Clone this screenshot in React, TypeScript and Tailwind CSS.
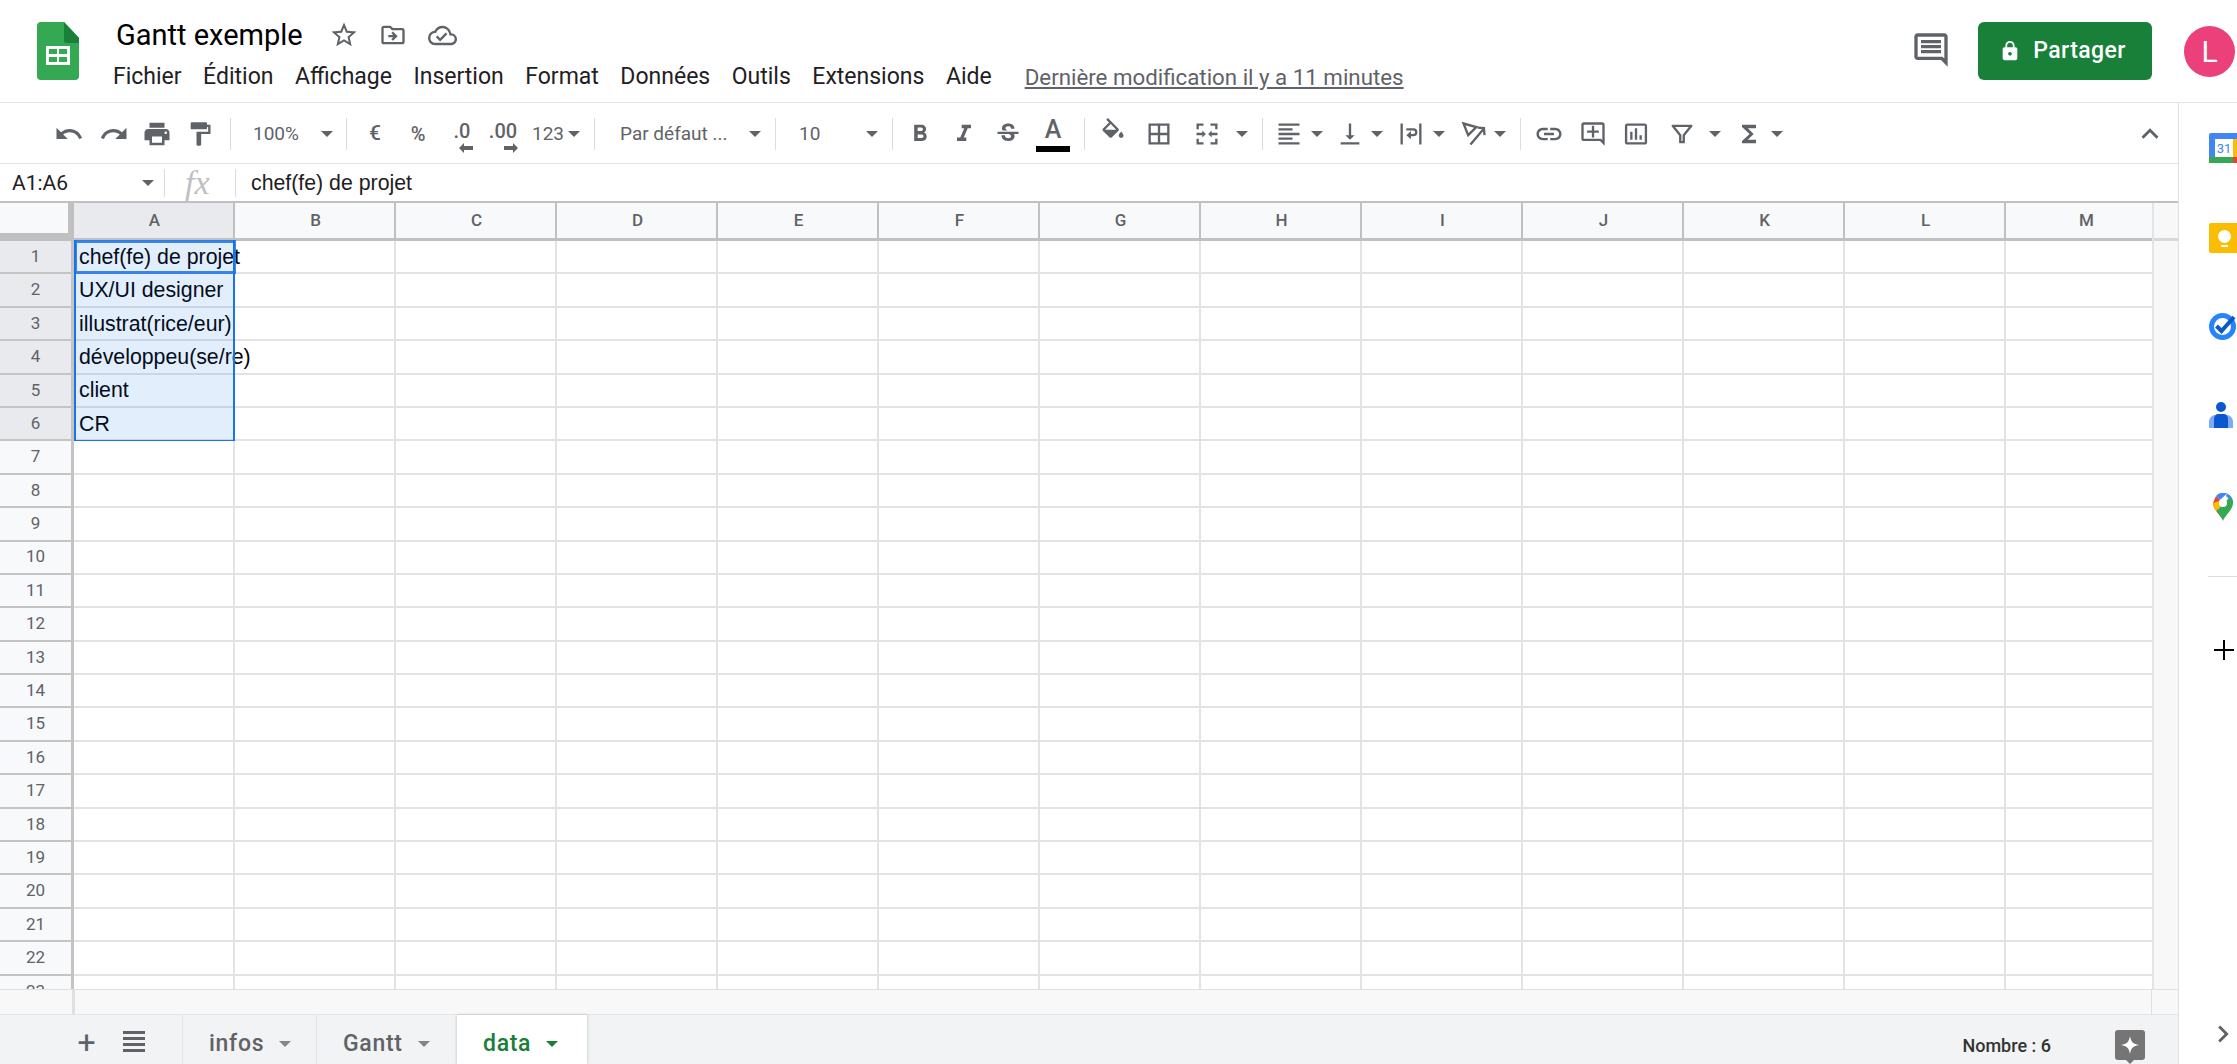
import type { ReactNode } from 'react';
import {
  MdChevronRight,
  MdFormatAlignLeft,
  MdFormatBold,
  MdFormatItalic,
  MdFormatPaint,
  MdFunctions,
  MdBorderAll,
  MdExpandLess,
  MdInsertChartOutlined,
  MdLink,
  MdLock,
  MdOutlineAddComment,
  MdOutlineCloudDone,
  MdOutlineComment,
  MdOutlineDriveFileMove,
  MdPrint,
  MdRedo,
  MdStarBorder,
  MdStrikethroughS,
  MdUndo,
  MdVerticalAlignBottom,
} from 'react-icons/md';

const columns = ['A', 'B', 'C', 'D', 'E', 'F', 'G', 'H', 'I', 'J', 'K', 'L', 'M'];
const menus = ['Fichier', 'Édition', 'Affichage', 'Insertion', 'Format', 'Données', 'Outils', 'Extensions', 'Aide'];
const cells = ['chef(fe) de projet', 'UX/UI designer', 'illustrat(rice/eur)', 'développeu(se/re)', 'client', 'CR'];
const rows = Array.from({ length: 23 }, (_, i) => i + 1);

function Caret({ className = '' }: { className?: string }) {
  return <span className={`block h-0 w-0 shrink-0 border-x-[6px] border-t-[6px] border-x-transparent border-t-[#5f6368] ${className}`} />;
}

function Sep({ className = '' }: { className?: string }) {
  return <span className={`block h-[32px] w-px shrink-0 bg-[#dadce0] ${className}`} />;
}

function Slot({ className = '', children }: { className?: string; children: ReactNode }) {
  return <span className={`flex shrink-0 items-center justify-center text-[#5f6368] ${className}`}>{children}</span>;
}

function SheetsLogo() {
  return (
    <svg width="42" height="58" viewBox="0 0 42 58" className="ml-[37px] mt-[22px] shrink-0">
      <path d="M4 0h23l15 16v38a4 4 0 0 1-4 4H4a4 4 0 0 1-4-4V4a4 4 0 0 1 4-4z" fill="#34a853" />
      <path d="M27 0l15 16v5H30a3 3 0 0 1-3-3z" fill="#188038" />
      <path d="M9 24h24v19H9z" fill="#fff" />
      <path d="M12 27h8v5h-8zM22 27h8v5h-8zM12 35h8v5h-8zM22 35h8v5h-8z" fill="#34a853" />
    </svg>
  );
}

function FillIcon() {
  return (
    <svg width="30" height="30" viewBox="0 0 24 24" fill="#5f6368">
      <path d="M16.560 8.940L7.620 0 6.210 1.410l2.380 2.380-5.150 5.150c-.59.59-.59 1.540 0 2.120l5.500 5.500c.29.29.68.44 1.060.44s.77-.15 1.060-.44l5.500-5.500c.59-.58.59-1.530 0-2.120zM5.210 10L10 5.210 14.790 10H5.210zM19 11.500s-2 2.170-2 3.500c0 1.100.9 2 2 2s2-.9 2-2c0-1.330-2-3.500-2-3.500z" />
    </svg>
  );
}

function MergeIcon() {
  return (
    <svg width="28" height="28" viewBox="0 0 24 24" fill="#5f6368">
      <path d="M3 3h6v2H5v3H3zM15 3h6v5h-2V5h-4zM3 16h2v3h4v2H3zM19 16h2v5h-6v-2h4z" />
      <path d="M3 11h5V9l3 3-3 3v-2H3zM21 11h-5V9l-3 3 3 3v-2h5z" />
    </svg>
  );
}

function WrapIcon() {
  return (
    <svg width="28" height="28" viewBox="0 0 24 24" fill="#5f6368">
      <path d="M3 3h2v18H3zM19 3h2v18h-2z" />
      <path d="M8 7h6a3.500 3.500 0 0 1 0 7h-2v2.500L8 13l4-3.500V12h2a1.500 1.500 0 0 0 0-3H8z" />
    </svg>
  );
}

function RotateIcon() {
  return (
    <svg width="28" height="28" viewBox="0 0 24 24" fill="none" stroke="#5f6368" strokeWidth="2">
      <path d="M3 3l11 3-7 7z" />
      <path d="M9 21L20 8M15 6.500l5.500 0.500 0.500 6" />
    </svg>
  );
}

function FilterIcon() {
  return (
    <svg width="28" height="28" viewBox="0 0 24 24" fill="none" stroke="#5f6368" strokeWidth="2">
      <path d="M4 5h16l-6.500 8v6h-3v-6z" strokeLinejoin="round" />
    </svg>
  );
}

function SmallArrow({ flip = false, className = '' }: { flip?: boolean; className?: string }) {
  return (
    <svg width="14" height="10" viewBox="0 0 14 10" fill="#5f6368" className={`absolute ${flip ? 'rotate-180' : ''} ${className}`}>
      <path d="M0 5l5-5v3h9v4H5v3z" />
    </svg>
  );
}

function ExploreIcon() {
  return (
    <svg width="30" height="36" viewBox="0 0 30 36" className="ml-[64px] mt-[15px] shrink-0">
      <path d="M3 0h24a3 3 0 0 1 3 3v24a3 3 0 0 1-3 3h-8l-4 4-4-4H3a3 3 0 0 1-3-3V3a3 3 0 0 1 3-3z" fill="#757575" />
      <path d="M15 6c1 6 3 8 9 9-6 1-8 3-9 9-1-6-3-8-9-9 6-1 8-3 9-9z" fill="#fff" />
    </svg>
  );
}

function Header() {
  return (
    <header className="flex h-[103px] shrink-0 border-b border-[#e4e5e7]">
      <SheetsLogo />
      <div className="ml-[37px] flex flex-col">
        <div className="mt-[18px] flex h-[34px] items-center">
          <span className="text-[29px] leading-none text-black">Gantt exemple</span>
          <MdStarBorder className="ml-[26px] text-[#5f6368]" size={30} />
          <MdOutlineDriveFileMove className="ml-[20px] text-[#5f6368]" size={28} />
          <MdOutlineCloudDone className="ml-[21px] text-[#5f6368]" size={29} />
        </div>
        <nav className="-ml-[3px] mt-[8px] flex items-center gap-[21.500px] text-[23px] leading-[34px] text-[#1f2023]">
          {menus.map((m) => (
            <span key={m}>{m}</span>
          ))}
          <span className="ml-[11.500px] text-[22.300px] text-[#5f6368] underline">Dernière modification il y a 11 minutes</span>
        </nav>
      </div>
      <div className="ml-auto flex items-start">
        <MdOutlineComment className="mt-[30px] text-[#5f6368]" size={40} />
        <button className="ml-[27px] mt-[22px] flex h-[58px] w-[174px] items-center justify-center gap-[12px] rounded-[6px] bg-[#188038] pr-[5px] text-[23px] font-medium tracking-[0.4px] text-white">
          <MdLock size={22} />
          Partager
        </button>
        <div className="ml-[32px] mr-[2px] mt-[26px] flex h-[51px] w-[51px] items-center justify-center rounded-full bg-[#ec407a] text-[30px] text-white">L</div>
      </div>
    </header>
  );
}

function Toolbar() {
  return (
    <div className="flex h-[61px] shrink-0 items-center border-b border-[#e4e5e7] pt-[2px] text-[19px] text-[#5f6368]">
      <Slot className="ml-[54px] w-[30px]"><MdUndo size={30} /></Slot>
      <Slot className="ml-[15px] w-[30px]"><MdRedo size={30} /></Slot>
      <Slot className="ml-[13px] w-[30px]"><MdPrint size={30} /></Slot>
      <Slot className="ml-[14px] w-[28px]"><MdFormatPaint size={28} /></Slot>
      <Sep className="ml-[16px]" />
      <span className="ml-[22px] w-[46px]">100%</span>
      <Caret className="ml-[22px]" />
      <Sep className="ml-[13px]" />
      <Slot className="ml-[16px] w-[24px] text-[21px] font-medium">€</Slot>
      <Slot className="ml-[19px] w-[24px] text-[20px] font-medium">%</Slot>
      <Slot className="relative ml-[17px] h-[30px] w-[30px] items-start text-[20px] font-medium leading-[24px]">
        .0
        <SmallArrow className="left-[12px] top-[24px]" />
      </Slot>
      <Slot className="relative ml-[11px] h-[30px] w-[30px] items-start text-[20px] font-medium leading-[24px]">
        .00
        <SmallArrow flip className="left-[16px] top-[24px]" />
      </Slot>
      <span className="ml-[14px] w-[32px]">123</span>
      <Caret className="ml-[4px]" />
      <Sep className="ml-[14px]" />
      <span className="ml-[25px] w-[107px] whitespace-nowrap">Par défaut ...</span>
      <Caret className="ml-[22px]" />
      <Sep className="ml-[14px]" />
      <span className="ml-[23px] w-[21px]">10</span>
      <Caret className="ml-[46px]" />
      <Sep className="ml-[14px]" />
      <Slot className="ml-[13px] w-[28px]"><MdFormatBold size={38} /></Slot>
      <Slot className="ml-[16px] w-[28px]"><MdFormatItalic size={36} /></Slot>
      <Slot className="ml-[16px] w-[28px]"><MdStrikethroughS size={30} /></Slot>
      <span className="ml-[14px] flex h-[36px] w-[34px] flex-col items-center justify-between">
        <span className="text-[25px] font-medium leading-[28px] text-[#5f6368]">A</span>
        <span className="block h-[6px] w-full bg-black" />
      </span>
      <Sep className="ml-[14px]" />
      <Slot className="ml-[14px] w-[28px] -translate-y-[2px]"><FillIcon /></Slot>
      <Slot className="ml-[18px] w-[28px]"><MdBorderAll size={30} /></Slot>
      <Slot className="ml-[20px] w-[28px]"><MergeIcon /></Slot>
      <Caret className="ml-[15px]" />
      <Sep className="ml-[14px]" />
      <Slot className="ml-[12px] w-[28px]"><MdFormatAlignLeft size={30} /></Slot>
      <Caret className="ml-[8px]" />
      <Slot className="ml-[13px] w-[28px]"><MdVerticalAlignBottom size={28} /></Slot>
      <Caret className="ml-[7px]" />
      <Slot className="ml-[14px] w-[28px]"><WrapIcon /></Slot>
      <Caret className="ml-[8px]" />
      <Slot className="ml-[15px] w-[28px]"><RotateIcon /></Slot>
      <Caret className="ml-[6px]" />
      <Sep className="ml-[14px]" />
      <Slot className="ml-[13px] w-[30px]"><MdLink size={32} /></Slot>
      <Slot className="ml-[15px] w-[28px]"><MdOutlineAddComment size={28} /></Slot>
      <Slot className="ml-[15px] w-[28px]"><MdInsertChartOutlined size={30} /></Slot>
      <Slot className="ml-[18px] w-[28px]"><FilterIcon /></Slot>
      <Caret className="ml-[13px]" />
      <Slot className="ml-[14px] w-[28px]"><MdFunctions size={30} /></Slot>
      <Caret className="ml-[8px]" />
      <Slot className="ml-auto mr-[11px] w-[34px]"><MdExpandLess size={34} /></Slot>
    </div>
  );
}

function FormulaBar() {
  return (
    <div className="flex h-[39px] shrink-0 items-center border-b-2 border-[#c0c0c0] text-[#1f2023]">
      <span className="ml-[12px] w-[130px] pt-[3px] text-[21px]">A1:A6</span>
      <Caret />
      <Sep className="ml-[10px] !h-[28px]" />
      <span className="ml-[20px] w-[50px] font-['Liberation_Serif',serif] text-[34px] italic leading-none text-[#c0c0c0]">fx</span>
      <Sep className="!h-[28px]" />
      <span className="ml-[15px] pt-[3px] font-['Liberation_Sans',Arial,sans-serif] text-[21.300px]">chef(fe) de projet</span>
    </div>
  );
}

function Grid() {
  return (
    <div className="flex min-h-0 flex-1">
      <div className="relative min-w-0 flex-1 overflow-hidden">
        <div className="flex h-[38px] text-[17px] font-medium text-[#5f6368]">
          <div className="h-full w-[74px] shrink-0 border-b-[8px] border-r-[6px] border-[#c0c0c0] bg-[#f8f9fa]" />
          {columns.map((c) => (
            <div
              key={c}
              className={`flex h-full w-[161px] shrink-0 items-center justify-center border-b-[3px] border-r-2 border-[#c0c0c0] pl-[2px] ${
                c === 'A' ? 'bg-[#e8eaed]' : 'bg-[#f8f9fa]'
              }`}
            >
              {c}
            </div>
          ))}
        </div>
        {rows.map((r) => (
          <div key={r} className="flex h-[33.400px] font-['Liberation_Sans',Arial,sans-serif] text-[21.300px] text-black">
            <div
              className={`flex w-[74px] shrink-0 items-center justify-center border-b-2 border-r-[3px] border-[#c4c4c4] font-['Roboto',sans-serif] text-[17px] text-[#5f6368] ${
                r <= 6 ? 'bg-[#e8eaed]' : 'bg-[#f8f9fa]'
              }`}
            >
              {r}
            </div>
            {columns.map((c) => (
              <div
                key={c}
                className="flex w-[161px] shrink-0 items-center whitespace-nowrap border-b-2 border-r-2 border-[#e2e3e3] pl-[5px] pt-[2px]"
              >
                {c === 'A' ? cells[r - 1] : null}
              </div>
            ))}
          </div>
        ))}
        {/* selection over A1:A6 */}
        <div className="absolute left-[74px] top-[37px] h-[201px] w-[161px] border-x-2 border-b border-[#1a73e8] bg-[#1a73e8]/12" />
        <div className="absolute left-[74px] top-[37px] h-[34px] w-[162px] border-[3px] border-[#1a73e8]/85" />
      </div>
      <div className="w-[26px] shrink-0 border-l-2 border-[#e4e4e4] bg-[#f8f8f8]">
        <div className="h-[35px]" />
        <div className="h-[3px] bg-[#d5d8dc]" />
      </div>
    </div>
  );
}

function HorizontalScroll() {
  return (
    <div className="flex h-[25px] shrink-0 border-t border-[#e0e0e0] bg-[#f8f8f8]">
      <div className="w-[75px] shrink-0 border-r-[3px] border-[#e0e0e0]" />
      <div className="w-[2077px] shrink-0 border-r border-[#e0e0e0]" />
    </div>
  );
}

function Tabs() {
  return (
    <div className="flex h-[50px] shrink-0 items-stretch border-t border-[#e4e5e7] bg-[#f1f3f4] text-[23px] font-medium tracking-[0.7px] text-[#5f6368]">
      <span className="ml-[74px] flex w-[26px] items-center justify-center pt-[5px] text-[32px] font-normal leading-none">+</span>
      <span className="ml-[23px] flex w-[22px] flex-col justify-center gap-[3px] pt-[3px]">
        <i className="block h-[3px] bg-[#5f6368]" />
        <i className="block h-[3px] bg-[#5f6368]" />
        <i className="block h-[3px] bg-[#5f6368]" />
        <i className="block h-[3px] bg-[#5f6368]" />
      </span>
      <div className="ml-[37px] flex w-[134px] items-center border-l border-[#e4e5e7] pl-[26px] pt-[9px]">
        infos
        <Caret className="ml-[15px] !border-t-[#80868b]" />
      </div>
      <div className="flex w-[141px] items-center border-l border-[#e4e5e7] pl-[26px] pt-[9px]">
        Gantt
        <Caret className="ml-[15px] !border-t-[#80868b]" />
      </div>
      <div className="flex w-[130px] items-center bg-white pl-[26px] pt-[9px] text-[#188038] shadow-[0_0_3px_rgba(60,64,67,0.3)]">
        data
        <Caret className="ml-[15px] !border-t-[#188038]" />
      </div>
      <span className="ml-auto flex items-center pt-[11px] text-[18px] tracking-normal text-[#333]">Nombre : 6</span>
      <ExploreIcon />
      <span className="w-[33px] shrink-0" />
    </div>
  );
}

function SidePanel() {
  return (
    <aside className="flex w-[59px] shrink-0 flex-col overflow-hidden border-l border-[#e0e0e0] pl-[30px] pt-[30px]">
      <div className="relative h-[30px] w-[30px] shrink-0 rounded-[2px] bg-[#4285f4]">
        <div className="absolute left-[6px] top-[6px] flex h-[18px] w-[18px] items-center justify-center bg-white font-['Roboto',sans-serif] text-[13px] leading-none text-[#4285f4]">31</div>
        <div className="absolute bottom-0 left-0 h-[6px] w-[24px] bg-[#34a853]" />
        <div className="absolute right-0 top-[6px] h-[18px] w-[6px] bg-[#fbbc04]" />
        <div className="absolute bottom-0 right-0 h-[6px] w-[6px] bg-[#ea4335]" />
      </div>
      <div className="mt-[60px] flex h-[30px] w-[30px] shrink-0 flex-col items-center justify-center rounded-[2px] bg-[#fbbc04]">
        <span className="block h-[13px] w-[13px] rounded-full bg-white" />
        <span className="mt-[2px] block h-[2px] w-[7px] bg-white" />
      </div>
      <svg width="29" height="29" viewBox="0 0 29 29" className="-ml-px mt-[59px] shrink-0">
        <circle cx="14.500" cy="14.500" r="11" fill="none" stroke="#2684fc" strokeWidth="5" />
        <path d="M8.500 14l5 5L26 5" fill="none" stroke="#0b57d0" strokeWidth="4" />
      </svg>
      <svg width="24" height="28" viewBox="0 0 24 28" className="mt-[60px] shrink-0">
        <circle cx="12" cy="6" r="5" fill="#0b57d0" />
        <path d="M0 27v-6c0-4 3-7 6-7h12c3 0 6 3 6 7v6z" fill="#7baaf7" />
        <path d="M5 27V18c0-3 2-5 4-5h6c2 0 4 2 4 5v9z" fill="#0b57d0" />
      </svg>
      <svg width="20" height="28" viewBox="0 0 20 28" className="ml-[4px] mt-[64px] shrink-0">
        <path d="M10 28C8 22 0 17 0 10l3-7 4 4-3 6z" fill="#ea4335" />
        <path d="M3 3a10 10 0 0 1 11-2.500L7 7z" fill="#4285f4" />
        <path d="M14 0.500A10 10 0 0 1 20 10l-7-7z" fill="#4285f4" />
        <path d="M0 10c0 3 1.500 5 3.500 8L10 11 6 8z" fill="#fbbc04" />
        <path d="M20 10c0 7-8 12-10 18-1-3-4-7-6.500-10L17 4c2 2 3 4 3 6z" fill="#34a853" />
        <circle cx="10" cy="10" r="4" fill="#fff" />
      </svg>
      <div className="-ml-px mt-[55px] h-px w-[30px] shrink-0 bg-[#dadce0]" />
      <svg width="24" height="24" viewBox="0 0 24 24" className="ml-[3px] mt-[61px] shrink-0 text-black">
        <path d="M11 2h2v9h9v2h-9v9h-2v-9H2v-2h9z" fill="currentColor" />
      </svg>
      <MdChevronRight className="-ml-[3px] mb-[13px] mt-auto shrink-0 text-[#5f6368]" size={34} />
    </aside>
  );
}

export default function App() {
  return (
    <div className="flex h-[1064px] w-[2237px] flex-col overflow-hidden bg-white font-['Roboto',sans-serif]">
      <Header />
      <div className="flex min-h-0 flex-1">
        <main className="flex w-[2178px] shrink-0 flex-col">
          <Toolbar />
          <FormulaBar />
          <Grid />
          <HorizontalScroll />
          <Tabs />
        </main>
        <SidePanel />
      </div>
    </div>
  );
}
